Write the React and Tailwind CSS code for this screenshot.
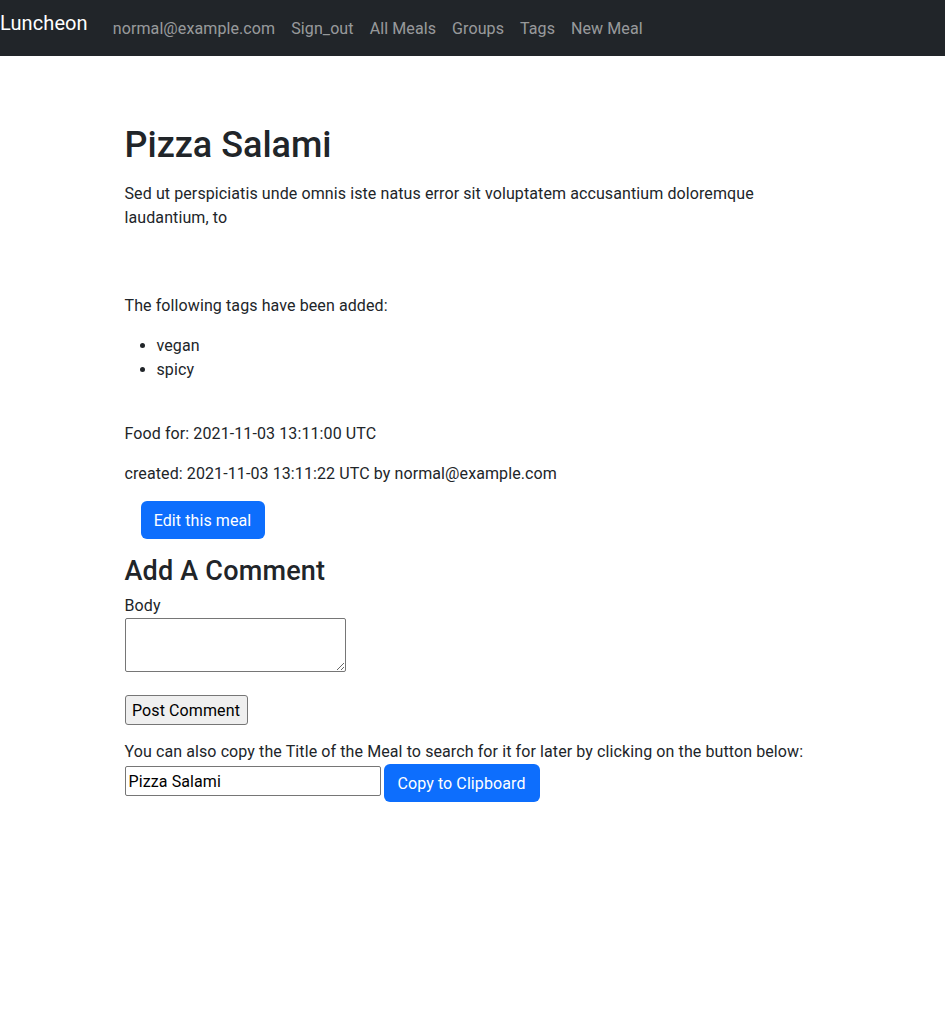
export default function App() {
  const links = ["normal@example.com", "Sign_out", "All Meals", "Groups", "Tags", "New Meal"];
  return (
    <div className="min-h-[1016px] bg-white text-[#212529] text-[16px] leading-[24px] tracking-[0.1px] font-['Roboto',sans-serif]">
      <nav className="h-[56px] bg-[#212529] flex items-center">
        <a className="self-start mt-[8px] text-[20px] leading-[30px] text-white mr-4 tracking-[0.1px]">Luncheon</a>
        <ul className="flex items-center mt-[2px] ml-[1px]">
          {links.map((l) => (
            <li key={l}>
              <a className="block px-2 py-2 text-[rgba(255,255,255,0.55)]">{l}</a>
            </li>
          ))}
        </ul>
      </nav>
      <main className="max-w-[720px] mx-auto px-3 pt-[68px]">
        <h1 className="text-[36px] leading-[43px] font-medium tracking-[0px]">Pizza Salami</h1>
        <p className="mt-[15px]">
          Sed ut perspiciatis unde omnis iste natus error sit voluptatem accusantium doloremque laudantium, to
        </p>
        <p className="mt-[64px]">The following tags have been added:</p>
        <ul className="mt-4 pl-8 list-disc">
          <li>vegan</li>
          <li>spicy</li>
        </ul>
        <p className="mt-[40px]">Food for: 2021-11-03 13:11:00 UTC</p>
        <p className="mt-4">created: 2021-11-03 13:11:22 UTC by normal@example.com</p>
        <div className="mt-[15px] ml-4">
          <button className="h-[38px] w-[124px] rounded-[6px] bg-[#0d6efd] text-white text-[16px] leading-[24px] pt-[1px]">
            Edit this meal
          </button>
        </div>
        <h3 className="mt-4 text-[27px] leading-[32px] font-medium tracking-[0.2px]">Add A Comment</h3>
        <label className="block mt-[7px]">Body</label>
        <textarea className="block w-[221px] h-[54px] border border-[#767676] rounded-[2px] bg-white"></textarea>
        <button className="block mt-[23px] w-[123px] h-[30px] bg-[#efefef] border border-[#767676] rounded-[3px] text-black text-[16px] leading-[24px] pt-[1px]">
          Post Comment
        </button>
        <p className="mt-[15px]">
          You can also copy the Title of the Meal to search for it for later by clicking on the button below:
        </p>
        <div className="flex items-start gap-[3px]">
          <input
            readOnly
            value="Pizza Salami"
            className="mt-[2px] w-[256px] h-[30px] border border-[#767676] rounded-[2px] px-[3px] text-black text-[16px] outline-none"
          />
          <button className="h-[38px] w-[156px] rounded-[6px] bg-[#0d6efd] text-white text-[16px] leading-[24px] pt-[1px]">
            Copy to Clipboard
          </button>
        </div>
      </main>
    </div>
  );
}
